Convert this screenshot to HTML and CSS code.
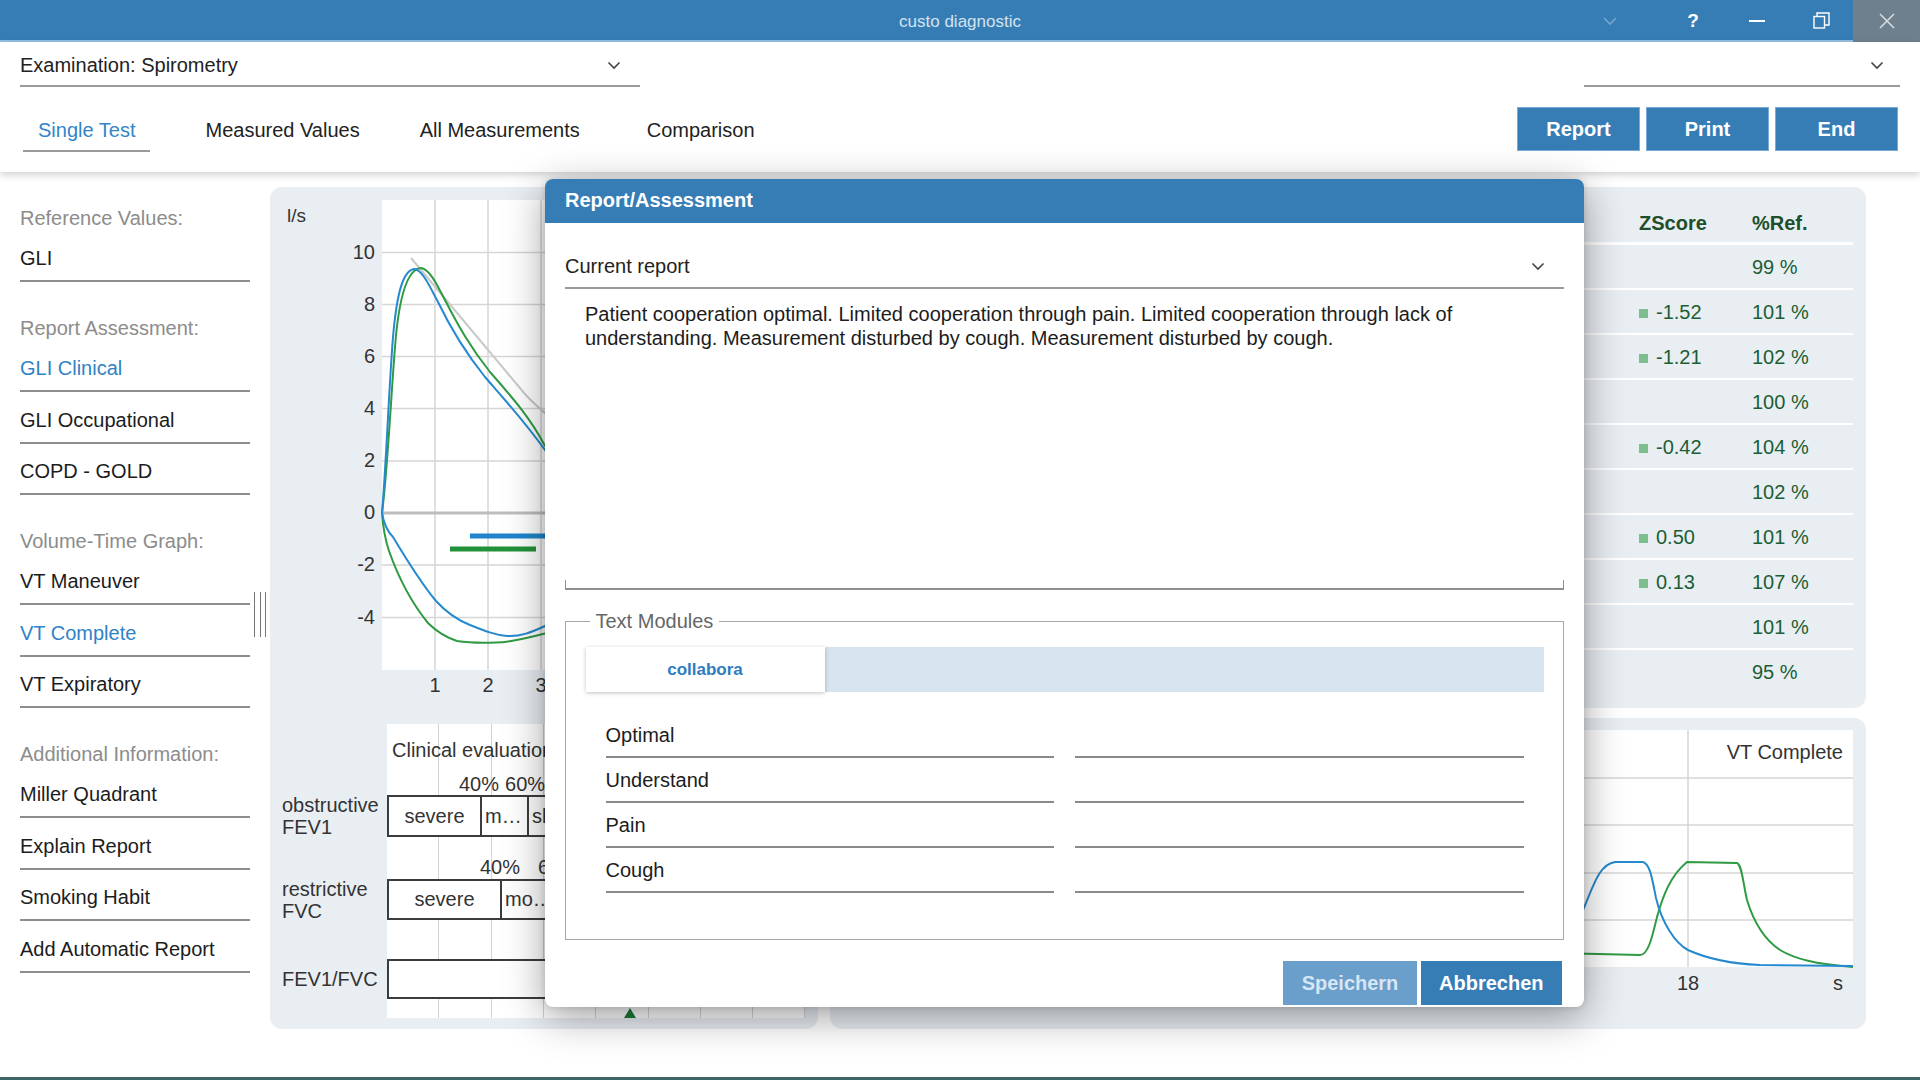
FILE: index.html
```html
<!DOCTYPE html>
<html lang="en">
<head>
<meta charset="utf-8">
<title>custo diagnostic</title>
<link rel="stylesheet" href="styles.css">
</head>
<body>
<div class="titlebar">
  <div></div>
  <div class="app-title">custo diagnostic</div>
  <div class="win-controls">
    <div class="wc wc-chev"><svg width="16" height="10" viewBox="0 0 16 10"><polyline points="2,2 8,8 14,2" fill="none" stroke="#76a6d0" stroke-width="1.6"/></svg></div>
    <div class="wc wc-help">?</div>
    <div class="wc"><svg width="18" height="4" viewBox="0 0 18 4"><line x1="1" y1="2" x2="17" y2="2" stroke="#fff" stroke-width="2"/></svg></div>
    <div class="wc"><svg width="17" height="17" viewBox="0 0 17 17"><rect x="1" y="4.5" width="10.5" height="11.5" fill="none" stroke="#fff" stroke-width="1.4"/><polyline points="4,4.5 4,1 16,1 16,13 11.5,13" fill="none" stroke="#fff" stroke-width="1.4"/></svg></div>
    <div class="wc wc-close"><svg width="16" height="16" viewBox="0 0 16 16"><line x1="1" y1="1" x2="15" y2="15" stroke="#d4dbe1" stroke-width="1.6"/><line x1="15" y1="1" x2="1" y2="15" stroke="#d4dbe1" stroke-width="1.6"/></svg></div>
  </div>
</div>

<div class="header">
  <div class="header-row1">
    <div class="select select-exam"><span>Examination: Spirometry</span><svg class="chev" width="14" height="9" viewBox="0 0 14 9"><polyline points="1.5,1.5 7,7 12.5,1.5" fill="none" stroke="#444" stroke-width="1.6"/></svg></div>
    <div class="select select-right"><span></span><svg class="chev" width="14" height="9" viewBox="0 0 14 9"><polyline points="1.5,1.5 7,7 12.5,1.5" fill="none" stroke="#444" stroke-width="1.6"/></svg></div>
  </div>
  <div class="header-row2">
    <div class="tabs">
      <div class="tab active">Single Test</div>
      <div class="tab tab-2">Measured Values</div>
      <div class="tab tab-3">All Measurements</div>
      <div class="tab tab-4">Comparison</div>
    </div>
    <div class="actions">
      <button class="hbtn">Report</button>
      <button class="hbtn">Print</button>
      <button class="hbtn">End</button>
    </div>
  </div>
</div>

<div class="main">
  <div class="sidebar">
    <div class="side-label">Reference Values:</div>
    <div class="side-item">GLI</div>
    <div class="side-label">Report Assessment:</div>
    <div class="side-item active">GLI Clinical</div>
    <div class="side-item">GLI Occupational</div>
    <div class="side-item">COPD - GOLD</div>
    <div class="side-label">Volume-Time Graph:</div>
    <div class="side-item">VT Maneuver</div>
    <div class="side-item active">VT Complete</div>
    <div class="side-item">VT Expiratory</div>
    <div class="side-label">Additional Information:</div>
    <div class="side-item">Miller Quadrant</div>
    <div class="side-item">Explain Report</div>
    <div class="side-item">Smoking Habit</div>
    <div class="side-item">Add Automatic Report</div>
  </div>

  <div class="splitter"><div class="grip"></div></div>

  <div class="card card-left">
    <svg class="fv-chart" width="548" height="537" viewBox="0 0 548 537">
      <text class="axis-unit" x="17" y="35">l/s</text>
      <rect x="112" y="13" width="423" height="470" fill="#fff"/>
      <g stroke="#d6d6d6" stroke-width="1.5">
        <line x1="165" y1="13" x2="165" y2="483"/>
        <line x1="218" y1="13" x2="218" y2="483"/>
        <line x1="271" y1="13" x2="271" y2="483"/>
        <line x1="324" y1="13" x2="324" y2="483"/>
        <line x1="377" y1="13" x2="377" y2="483"/>
        <line x1="430" y1="13" x2="430" y2="483"/>
        <line x1="483" y1="13" x2="483" y2="483"/>
        <line x1="112" y1="65.5" x2="535" y2="65.5"/>
        <line x1="112" y1="117.5" x2="535" y2="117.5"/>
        <line x1="112" y1="169.5" x2="535" y2="169.5"/>
        <line x1="112" y1="221.5" x2="535" y2="221.5"/>
        <line x1="112" y1="274" x2="535" y2="274"/>
        <line x1="112" y1="378" x2="535" y2="378"/>
        <line x1="112" y1="430.5" x2="535" y2="430.5"/>
      </g>
      <line x1="112" y1="326" x2="535" y2="326" stroke="#bdbdbd" stroke-width="3"/>
      <g class="axis" text-anchor="end">
        <text x="105" y="71.5">10</text>
        <text x="105" y="123.5">8</text>
        <text x="105" y="175.5">6</text>
        <text x="105" y="227.5">4</text>
        <text x="105" y="280">2</text>
        <text x="105" y="332">0</text>
        <text x="105" y="384">-2</text>
        <text x="105" y="436.5">-4</text>
      </g>
      <g class="axis" text-anchor="middle">
        <text x="165" y="505">1</text>
        <text x="218" y="505">2</text>
        <text x="271" y="505">3</text>
      </g>
      <path d="M141,71 L255,207 C262,215 268,220 275,226 C320,262 380,300 420,326" fill="none" stroke="#c9c9c9" stroke-width="2"/>
      <path d="M112,326 C117,290 121,210 125,160 C129,108 138,82 151,81 C160,82 168,100 176,115 C188,138 200,160 220,185 C240,208 260,230 275,259 C300,288 340,312 405,326" fill="none" stroke="#2e9a42" stroke-width="2"/>
      <path d="M112,326 C116,280 119,200 123,150 C127,105 133,84 144,82 C152,82 160,100 168,115 C180,140 195,165 215,190 C235,213 255,235 275,263 C300,290 340,315 400,326" fill="none" stroke="#2589cf" stroke-width="2"/>
      <path d="M112,326 C113,340 115,352 119,364 C130,395 145,420 158,436 C168,446 178,451 187,454 C200,456 212,456 226,455.5 C245,455 260,450 275,446.6 C320,430 370,380 405,326" fill="none" stroke="#2e9a42" stroke-width="2"/>
      <path d="M112,326 C114,338 118,345 123,350 C135,370 150,395 166,414 C175,424 185,432 200,438 C215,444 225,448 237,449 C250,450 262,445 275,439 C320,420 370,370 400,326" fill="none" stroke="#2589cf" stroke-width="2"/>
      <line x1="200" y1="349" x2="290" y2="349" stroke="#1f86cc" stroke-width="5"/>
      <line x1="180" y1="362" x2="266" y2="362" stroke="#23913a" stroke-width="5"/>
    </svg>

    <div class="clinical">
      <div class="cl-label"></div>
      <div class="cl-area cl-title">Clinical evaluation</div>

      <div class="cl-label"></div>
      <div class="cl-area cl-pct pct-obs"><span>40%</span><span class="pct-gap">60%</span></div>

      <div class="cl-label">obstructive<br>FEV1</div>
      <div class="cl-area"><div class="cl-box"><div class="cl-cell w93">severe</div><div class="cl-cell w47 left">m…</div><div class="cl-cell w60 left">slight</div><div class="cl-cell grow"></div></div></div>

      <div class="cl-label"></div>
      <div class="cl-area cl-pct pct-res"><span>40%</span><span class="pct-gap2">60%</span></div>

      <div class="cl-label">restrictive<br>FVC</div>
      <div class="cl-area"><div class="cl-box"><div class="cl-cell w113">severe</div><div class="cl-cell w55 left">mo…</div><div class="cl-cell w70"></div><div class="cl-cell grow"></div></div></div>

      <div class="cl-label"></div>
      <div class="cl-area"></div>

      <div class="cl-label">FEV1/FVC</div>
      <div class="cl-area"><div class="cl-box"><div class="cl-cell grow"></div></div></div>

      <div class="cl-label"></div>
      <div class="cl-area cl-marker-row"><div class="marker-tri"></div></div>
    </div>
  </div>

  <div class="right-col">
    <div class="card card-values">
      <div class="vrow vhead"><span></span><span>ZScore</span><span>%Ref.</span></div>
      <div class="vrow"><span></span><span></span><span>99 %</span></div>
      <div class="vrow"><span></span><span><i class="zmark"></i>-1.52</span><span>101 %</span></div>
      <div class="vrow"><span></span><span><i class="zmark"></i>-1.21</span><span>102 %</span></div>
      <div class="vrow"><span></span><span></span><span>100 %</span></div>
      <div class="vrow"><span></span><span><i class="zmark"></i>-0.42</span><span>104 %</span></div>
      <div class="vrow"><span></span><span></span><span>102 %</span></div>
      <div class="vrow"><span></span><span><i class="zmark"></i>0.50</span><span>101 %</span></div>
      <div class="vrow"><span></span><span><i class="zmark"></i>0.13</span><span>107 %</span></div>
      <div class="vrow"><span></span><span></span><span>101 %</span></div>
      <div class="vrow last"><span></span><span></span><span>95 %</span></div>
    </div>
    <div class="card card-vt">
      <svg width="1036" height="311" viewBox="0 0 1036 311">
        <rect x="65" y="12" width="958" height="237" fill="#fff"/>
        <g stroke="#d6d6d6" stroke-width="1.5">
          <line x1="65" y1="60" x2="1023" y2="60"/>
          <line x1="65" y1="107" x2="1023" y2="107"/>
          <line x1="65" y1="155" x2="1023" y2="155"/>
          <line x1="65" y1="202" x2="1023" y2="202"/>
          <line x1="248" y1="12" x2="248" y2="249"/>
          <line x1="553" y1="12" x2="553" y2="249"/>
          <line x1="858" y1="12" x2="858" y2="249"/>
        </g>
        <text class="axis" x="1013" y="41" text-anchor="end">VT Complete</text>
        <text class="axis" x="858" y="272" text-anchor="middle">18</text>
        <text class="axis" x="1013" y="272" text-anchor="end">s</text>
        <path d="M600,232 L810,237 C818,237 822,220 827,199 C833,178 840,158 857,144 L907,145 C912,147 913,165 917,182 C924,205 935,222 950,232 C965,241 985,246 1023,249" fill="none" stroke="#2e9a42" stroke-width="2"/>
        <path d="M650,249 C690,249 725,246 740,220 C748,205 752,195 758,180 C766,160 772,146 785,144 L813,144 C820,146 822,160 826,180 C832,205 845,225 858,232 C880,242 905,246 930,247 L1023,248" fill="none" stroke="#2589cf" stroke-width="2"/>
      </svg>
    </div>
  </div>
</div>

<div class="statusline"></div>

<div class="modal">
  <div class="modal-head">Report/Assessment</div>
  <div class="modal-body">
    <div class="select select-report"><span>Current report</span><svg class="chev" width="14" height="9" viewBox="0 0 14 9"><polyline points="1.5,1.5 7,7 12.5,1.5" fill="none" stroke="#444" stroke-width="1.6"/></svg></div>
    <div class="report-text">Patient cooperation optimal. Limited cooperation through pain. Limited cooperation through lack of understanding. Measurement disturbed by cough. Measurement disturbed by cough.</div>
    <fieldset class="modules">
      <legend>Text Modules</legend>
      <div class="module-tabs"><div class="module-tab">collabora</div></div>
      <div class="module-grid">
        <div class="module-item">Optimal</div><div class="module-item"></div>
        <div class="module-item">Understand</div><div class="module-item"></div>
        <div class="module-item">Pain</div><div class="module-item"></div>
        <div class="module-item">Cough</div><div class="module-item"></div>
      </div>
    </fieldset>
    <div class="modal-actions">
      <button class="mbtn btn-save">Speichern</button>
      <button class="mbtn btn-cancel">Abbrechen</button>
    </div>
  </div>
</div>
</body>
</html>
```

FILE: styles.css
```css
* { box-sizing: border-box; }
html, body { margin: 0; padding: 0; }
body {
  width: 1920px;
  height: 1080px;
  overflow: hidden;
  font-family: "Liberation Sans", Arial, sans-serif;
  font-size: 20px;
  color: #222;
  background: #fff;
  display: flex;
  flex-direction: column;
  position: relative;
}

/* title bar */
.titlebar {
  height: 42px;
  flex: none;
  background: linear-gradient(to bottom, #367db5 0, #367db5 40px, #94bfe2 40px, #94bfe2 42px);
  display: grid;
  grid-template-columns: 1fr auto 1fr;
  align-items: stretch;
}
.app-title { font-size: 17px; color: #d3e3f1; line-height: 40px; padding-top: 2px; }
.win-controls { display: flex; justify-self: end; height: 42px; }
.wc { width: 64px; height: 41px; display: flex; align-items: center; justify-content: center; color: #fff; }
.wc-chev { margin-right: 19px; }
.wc-help { font-weight: bold; font-size: 19px; }
.wc-close { width: 67px; height: 42px; background: #6e808e; }

/* header */
.header {
  height: 130px;
  flex: none;
  background: #fff;
  box-shadow: 0 3px 7px rgba(0, 0, 0, 0.18);
  position: relative;
  z-index: 2;
  padding: 0 20px;
}
.header-row1 { display: flex; justify-content: space-between; }
.select {
  display: flex;
  align-items: center;
  justify-content: space-between;
  border-bottom: 2px solid #9a9a9a;
  padding: 11px 19px 8px 0;
  line-height: 24px;
}
.select-exam { width: 620px; }
.select-right { width: 316px; padding-right: 16px; }
.chev { display: block; }
.header-row2 {
  margin-top: 20px;
  height: 45px;
  display: flex;
  justify-content: space-between;
}
.tabs { display: flex; margin-left: 3px; }
.tab {
  padding: 3px 15px 0;
  line-height: 40px;
  border-bottom: 2px solid transparent;
  color: #222;
}
.tab-2 { margin-left: 40px; }
.tab-3 { margin-left: 30px; }
.tab-4 { margin-left: 37px; }
.tab.active { color: #3385c8; border-bottom-color: #9a9a9a; }
.actions { display: flex; gap: 6px; margin-right: 2px; height: 44px; }
.hbtn {
  width: 123px;
  height: 44px;
  background: #367db5;
  border: 1px solid #7aabd6;
  color: #fff;
  font-family: "Liberation Sans", Arial, sans-serif;
  font-weight: bold;
  font-size: 20px;
  padding: 1px 0 0;
}

/* main */
.main { flex: 1; display: flex; padding-left: 20px; min-height: 0; }
.sidebar { width: 230px; flex: none; }
.side-label { color: #8c8c8c; height: 58.5px; padding-top: 34px; line-height: 24px; }
.side-item {
  height: 51.5px;
  padding-top: 15.5px;
  line-height: 24px;
  border-bottom: 2px solid #8d8d8d;
  color: #1c1c1c;
}
.side-item.active { color: #2f82c6; }
.splitter { width: 20px; flex: none; display: flex; justify-content: center; }
.grip {
  margin-top: 420px;
  width: 12px;
  height: 45px;
  border-left: 1px solid #777;
  border-right: 1px solid #777;
  background: linear-gradient(#777, #777) center / 1px 100% no-repeat;
}

.card { background: #e9eef3; border-radius: 12px; flex: none; }
.card-left { width: 548px; height: 842px; margin-top: 15px; overflow: hidden; }
.fv-chart { display: block; }
.axis { font-family: "Liberation Sans", Arial, sans-serif; font-size: 20px; fill: #333; }
.axis-unit { font-family: "Liberation Sans", Arial, sans-serif; font-size: 19px; fill: #333; }

.clinical {
  display: grid;
  grid-template-columns: 117px 418px;
  grid-template-rows: 50px 21px 42px 42px 41px 39px 40px 19px;
  color: #333;
}
.cl-label { padding-left: 12px; line-height: 22px; display: flex; flex-direction: column; justify-content: center; }
.cl-area {
  background-color: #fff;
  background-image: repeating-linear-gradient(to right, transparent 0, transparent 51.3px, #d3d3d3 51.3px, #d3d3d3 52.3px);
  min-width: 0;
}
.cl-title { padding: 14px 0 0 5px; line-height: 24px; white-space: nowrap; }
.cl-pct { line-height: 21px; white-space: nowrap; }
.pct-obs { padding-left: 72px; }
.pct-gap { margin-left: 6px; }
.pct-res { padding-left: 93px; display: flex; align-items: flex-end; line-height: 24px; }
.pct-gap2 { margin-left: 18px; }
.cl-box {
  display: flex;
  height: 100%;
  width: 400px;
  border: 2px solid #3c3c3c;
  background: #fff;
}
.cl-cell {
  flex: none;
  border-right: 2px solid #3c3c3c;
  text-align: center;
  display: flex;
  align-items: center;
  justify-content: center;
  white-space: nowrap;
}
.cl-cell.left { justify-content: flex-start; padding-left: 3px; }
.cl-cell.grow { flex: 1; border-right: none; }
.w93 { width: 93px; }
.w47 { width: 47px; }
.w60 { width: 60px; }
.w113 { width: 113px; }
.w55 { width: 55px; }
.w70 { width: 70px; }
.cl-marker-row { display: flex; align-items: flex-end; }
.marker-tri {
  margin-left: 237px;
  width: 0;
  height: 0;
  border-left: 6px solid transparent;
  border-right: 6px solid transparent;
  border-bottom: 10px solid #1f7a37;
}

.right-col { margin-left: 12px; margin-top: 15px; width: 1036px; flex: none; display: flex; flex-direction: column; gap: 10px; }
.card-values { height: 521px; padding: 0 13px 0 15px; }
.vrow {
  display: grid;
  grid-template-columns: 1fr 113px 101px;
  height: 45px;
  line-height: 44px;
  border-bottom: 2px solid #fff;
  color: #1b5e34;
  white-space: nowrap;
}
.vrow.last { border-bottom: none; }
.vhead {
  height: 58px;
  padding-top: 24px;
  line-height: 24px;
  border-bottom: 3px solid #fff;
  font-weight: bold;
  color: #1e4f2a;
}
.zmark {
  display: inline-block;
  width: 9px;
  height: 9px;
  background: #7dbe8e;
  margin-right: 8px;
  vertical-align: 1px;
}
.card-vt { height: 311px; }
.card-vt svg { display: block; }

.statusline { height: 3px; flex: none; background: #3c6667; }

/* modal */
.modal {
  position: absolute;
  left: 545px;
  top: 179px;
  width: 1039px;
  height: 828px;
  background: #fff;
  border-radius: 8px;
  box-shadow: 0 10px 40px rgba(0, 0, 0, 0.38), 0 0 6px rgba(0, 0, 0, 0.15);
  overflow: hidden;
  z-index: 10;
}
.modal-head {
  height: 44px;
  background: #367db5;
  color: #fff;
  font-weight: bold;
  font-size: 20px;
  line-height: 42px;
  padding-left: 20px;
}
.modal-body { padding: 0 20px; }
.select-report { padding: 31px 19px 9px 0; }
.report-text {
  height: 301px;
  padding: 13px 20px;
  line-height: 24px;
  border-bottom: 2px solid #8f8f8f;
  background:
    linear-gradient(#8f8f8f, #8f8f8f) left bottom / 1px 8px no-repeat,
    linear-gradient(#8f8f8f, #8f8f8f) right bottom / 1px 8px no-repeat;
  color: #1c1c1c;
}
.modules {
  margin: 19px 0 0;
  padding: 14px 19.5px 46px;
  border: 1px solid #a6a6a6;
  min-width: 0;
}
.modules legend {
  padding: 0 6px;
  margin-left: 4px;
  color: #666;
  line-height: 24px;
  font-size: 20px;
}
.module-tabs { display: flex; background: #d6e4f0; height: 45px; }
.module-tab {
  width: 239px;
  background: #fff;
  box-shadow: 0 1px 4px rgba(0, 0, 0, 0.25);
  font-weight: bold;
  font-size: 17px;
  color: #2d7cc0;
  text-align: center;
  line-height: 45px;
}
.module-grid {
  margin-top: 21px;
  padding: 0 20px;
  display: grid;
  grid-template-columns: 1fr 1fr;
  column-gap: 20.5px;
}
.module-item {
  height: 45px;
  padding-top: 10px;
  line-height: 24px;
  border-bottom: 2px solid #8a8a8a;
  color: #1c1c1c;
}
.modal-actions { display: flex; justify-content: flex-end; gap: 3.5px; margin-top: 21px; padding-right: 2px; }
.mbtn {
  height: 44px;
  border: none;
  font-family: "Liberation Sans", Arial, sans-serif;
  font-weight: bold;
  font-size: 20px;
  padding: 0;
}
.btn-save { width: 134px; background: #6a9ecb; color: #d8e6f3; }
.btn-cancel { width: 141.5px; background: #367db5; color: #fff; }
```
